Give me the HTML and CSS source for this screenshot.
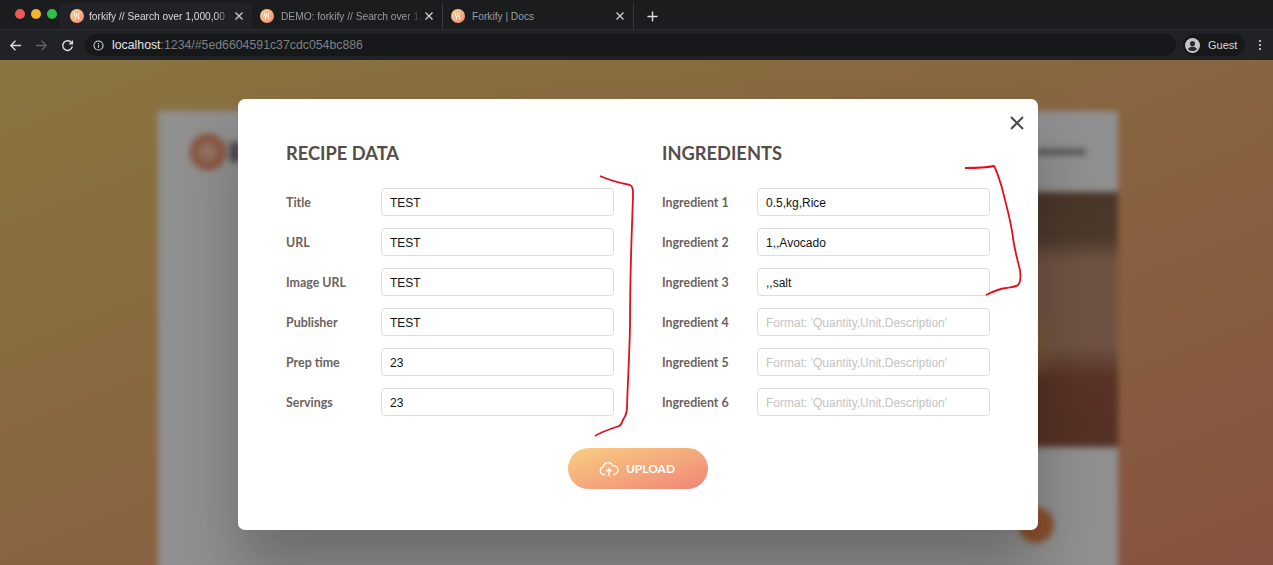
FILE: index.html
```html
<!DOCTYPE html>
<html>
  <head>
    <title>forkify // Search over 1,000,000 recipes</title>
    <link rel="stylesheet" href="styles.css">
  </head>
  <body>
    <svg class="defs" width="0" height="0">
      <defs>
        <linearGradient id="fav" x1="0" y1="0" x2="1" y2="1">
          <stop offset="0" stop-color="#f6d9a0"/>
          <stop offset="1" stop-color="#ef8a6c"/>
        </linearGradient>
        <symbol id="favicon" viewBox="0 0 14 14">
          <circle cx="7" cy="7" r="7" fill="url(#fav)"/>
          <path d="M4.5 4v2.5q0 1 1 1v3M6.5 4v2.5q0 1-1 1M9 4q-1 1-1 3t.8 1v2.500" fill="none" stroke="#fff" stroke-width=".9"/>
        </symbol>
        <symbol id="tabclose" viewBox="0 0 10 10">
          <path d="M1.500 1.500l7 7M8.500 1.500l-7 7" fill="none" stroke="currentColor" stroke-width="1.400"/>
        </symbol>
      </defs>
    </svg>

    <div class="tabstrip">
      <div class="lights">
        <span class="light red"></span>
        <span class="light yellow"></span>
        <span class="light green"></span>
      </div>
      <div class="tab active">
        <svg class="favicon"><use href="#favicon"/></svg>
        <span class="tab-title">forkify // Search over 1,000,00</span>
        <svg class="tab-close"><use href="#tabclose"/></svg>
      </div>
      <div class="tab">
        <svg class="favicon"><use href="#favicon"/></svg>
        <span class="tab-title">DEMO: forkify // Search over 1,</span>
        <svg class="tab-close"><use href="#tabclose"/></svg>
      </div>
      <div class="tab">
        <svg class="favicon"><use href="#favicon"/></svg>
        <span class="tab-title plain">Forkify | Docs</span>
        <svg class="tab-close"><use href="#tabclose"/></svg>
      </div>
      <svg class="new-tab" viewBox="0 0 12 12"><path d="M6 .5v11M.5 6h11" fill="none" stroke="#dcdde0" stroke-width="1.500"/></svg>
    </div>

    <div class="toolbar">
      <svg class="nav" viewBox="0 0 14 14"><path d="M13 7H2M7 2 2 7l5 5" fill="none" stroke="#d8dadd" stroke-width="1.500"/></svg>
      <svg class="nav" viewBox="0 0 14 14"><path d="M1 7h11M7 2l5 5-5 5" fill="none" stroke="#5d6064" stroke-width="1.500"/></svg>
      <svg class="nav" viewBox="0 0 14 14"><path d="M11.600 4.500A5.200 5.200 0 1 0 12.200 8M12.300 1.500v3.700H8.600" fill="none" stroke="#d8dadd" stroke-width="1.500"/></svg>
      <div class="omnibox">
        <svg class="info" viewBox="0 0 12 12"><circle cx="6" cy="6" r="5" fill="none" stroke="#d8dadd" stroke-width="1.100"/><path d="M6 5.200v3.300M6 3.200v1.100" stroke="#d8dadd" stroke-width="1.100"/></svg>
        <span class="host">localhost</span><span class="path">:1234/#5ed6604591c37cdc054bc886</span>
      </div>
      <div class="profile">
        <svg class="avatar" viewBox="0 0 16 16"><circle cx="8" cy="8" r="8" fill="#c4c6c9"/><circle cx="8" cy="6" r="2.700" fill="#2a2b2e"/><path d="M3.200 11.600c1-1.700 3-2.300 4.800-2.300s3.800.6 4.800 2.300c-1.100 1.400-2.800 2.300-4.800 2.300s-3.700-.9-4.800-2.300z" fill="#2a2b2e"/></svg>
        <span>Guest</span>
      </div>
      <svg class="menu" viewBox="0 0 4 12"><circle cx="2" cy="2" r="1.100" fill="#d8dadd"/><circle cx="2" cy="6" r="1.100" fill="#d8dadd"/><circle cx="2" cy="10" r="1.100" fill="#d8dadd"/></svg>
    </div>

    <div class="viewport">
      <div class="app">
        <div class="app-header">
          <span class="app-logo"></span>
          <span class="app-brand"></span>
          <span class="app-nav"></span>
        </div>
        <div class="app-body">
          <div class="app-results"></div>
          <div class="app-recipe">
            <div class="app-photo"></div>
            <div class="app-info">
              <span class="app-round"></span>
            </div>
          </div>
        </div>
      </div>
      <div class="overlay"></div>

      <form class="modal">
        <svg class="modal-close" viewBox="0 0 14 14"><path d="M1 1l12 12M13 1 1 13" fill="none" stroke="#4a4a4a" stroke-width="2"/></svg>
        <div class="columns">
          <div class="column">
            <h3 class="heading">RECIPE DATA</h3>
            <label class="label">Title</label>
            <input class="field" value="TEST">
            <label class="label">URL</label>
            <input class="field" value="TEST">
            <label class="label">Image URL</label>
            <input class="field" value="TEST">
            <label class="label">Publisher</label>
            <input class="field" value="TEST">
            <label class="label">Prep time</label>
            <input class="field" value="23">
            <label class="label">Servings</label>
            <input class="field" value="23">
          </div>
          <div class="column">
            <h3 class="heading">INGREDIENTS</h3>
            <label class="label">Ingredient 1</label>
            <input class="field" value="0.5,kg,Rice">
            <label class="label">Ingredient 2</label>
            <input class="field" value="1,,Avocado">
            <label class="label">Ingredient 3</label>
            <input class="field" value=",,salt">
            <label class="label">Ingredient 4</label>
            <input class="field" placeholder="Format: 'Quantity,Unit,Description'">
            <label class="label">Ingredient 5</label>
            <input class="field" placeholder="Format: 'Quantity,Unit,Description'">
            <label class="label">Ingredient 6</label>
            <input class="field" placeholder="Format: 'Quantity,Unit,Description'">
          </div>
        </div>
        <button class="upload" type="button">
          <svg class="upload-icon" viewBox="0 0 20 16"><path d="M6 13.500H4.800A3.800 3.800 0 0 1 4.300 6 5 5 0 0 1 14 5a4.300 4.300 0 0 1 1.500 8.500H14M10 15V8M7.300 10.500 10 7.800l2.700 2.700" fill="none" stroke="#fff" stroke-width="1.300"/></svg>
          <span>UPLOAD</span>
        </button>
      </form>

      <!-- pen marks drawn over the screen -->
      <svg class="marks" viewBox="0 0 1273 505">
        <path d="M600 116c9 4 20 7 30 9 3 1 3 5 3 12-1 30-3 70-3 130-1 40-3 70-3 82-1 6-2 8-3 9-3 5-2 7-5 8-9 3-18 6-24 10" fill="none" stroke="#e0101c" stroke-width="1.800"/>
        <path d="M965 108c10 0 20 0 29-2 3 5 5 12 8 22 4 16 9 33 11 50 2 14 5 24 7 32 1 8 0 13-2 15-2 2-7 2-12 3-8 1-14 4-20 7" fill="none" stroke="#e0101c" stroke-width="1.800"/>
      </svg>
    </div>
  </body>
</html>
```

FILE: styles.css
```css
* {
  box-sizing: border-box;
}

html,
body {
  margin: 0;
  height: 100%;
  overflow: hidden;
}

body {
  display: flex;
  flex-direction: column;
  background: #202124;
  font-family: "Liberation Sans", Arial, sans-serif;
}

.defs {
  position: absolute;
}

/* browser chrome */
.tabstrip {
  display: flex;
  align-items: flex-end;
  height: 30px;
  background: #1b1c1e;
  border-bottom: 1px solid #2c2d30;
}

.lights {
  display: flex;
  gap: 6px;
  width: 60px;
  padding: 0 0 10px 15px;
}

.light {
  width: 10px;
  height: 10px;
  border-radius: 50%;
}

.red {
  background: #ed5a56;
}

.yellow {
  background: #f0b52c;
}

.green {
  background: #2fc049;
}

.tab {
  display: flex;
  align-items: center;
  width: 191px;
  height: 26px;
  padding: 0 8px;
  border-right: 1px solid #3a3b3e;
  color: #9a9c9f;
  font-size: 10.200px;
}

.tab.active {
  width: 192px;
  padding-left: 10px;
  border-right: 0;
  border-radius: 7px 7px 0 0;
  background: #202225;
  color: #d8dadd;
}

.favicon {
  flex: none;
  width: 14px;
  height: 14px;
  margin-right: 7px;
}

.active .favicon {
  margin-right: 5px;
}

.tab-title {
  flex: 1;
  overflow: hidden;
  white-space: nowrap;
  -webkit-mask-image: linear-gradient(to right, #000 88%, transparent);
  mask-image: linear-gradient(to right, #000 88%, transparent);
}

.tab-title.plain {
  -webkit-mask-image: none;
  mask-image: none;
}

.tab-close {
  flex: none;
  width: 10px;
  height: 10px;
  margin-left: 2px;
  color: #c9cbce;
}

.new-tab {
  width: 11px;
  height: 11px;
  margin: 0 0 7px 13px;
}

.toolbar {
  display: flex;
  align-items: center;
  height: 30px;
  padding: 0 11px 0 9px;
  background: #202225;
}

.nav {
  flex: none;
  width: 13px;
  height: 13px;
  margin-right: 13px;
}

.omnibox {
  flex: 1;
  display: flex;
  align-items: center;
  height: 22px;
  margin-left: -2px;
  padding-left: 8px;
  border-radius: 11px;
  background: #17181a;
  font-size: 12.300px;
}

.info {
  width: 11px;
  height: 11px;
  margin-right: 8px;
}

.host {
  color: #e3e4e6;
}

.path {
  color: #7d8084;
}

.profile {
  display: flex;
  align-items: center;
  gap: 8px;
  width: 62px;
  height: 22px;
  margin-left: 7px;
  padding-left: 2px;
  border-radius: 11px;
  background: #17181a;
  color: #d8dadd;
  font-size: 11px;
}

.avatar {
  width: 15px;
  height: 15px;
}

.menu {
  width: 4px;
  height: 12px;
  margin-left: 13px;
}

/* blurred page behind the modal */
.viewport {
  position: relative;
  flex: 1;
  overflow: hidden;
  background: linear-gradient(to right bottom, #e6c46c, #e18a6b);
}

.app {
  display: flex;
  flex-direction: column;
  width: 960px;
  height: 600px;
  margin: 51px 0 0 158px;
  background: #f0f0f0;
  filter: blur(3px);
}

.app-header {
  display: flex;
  align-items: center;
  height: 81px;
  padding: 0 32px;
}

.app-logo {
  width: 36px;
  height: 36px;
  border-radius: 50%;
  background: radial-gradient(#f4c2a6 20%, #e27f58 65%);
}

.app-brand {
  width: 10px;
  height: 20px;
  margin-left: 4px;
  background: #777;
}

.app-nav {
  width: 50px;
  height: 6px;
  margin-left: auto;
  background: #8a8a8a;
}

.app-body {
  flex: 1;
  display: flex;
}

.app-results {
  width: 240px;
}

.app-recipe {
  flex: 1;
}

.app-photo {
  height: 255px;
  background:
    radial-gradient(circle at 86% 59%, #d8984f, transparent 7%),
    linear-gradient(#7c5c46, #80604a 18%, #b88a70 27%, #b88a72 60%, #93543e 73%, #8e5240);
}

.app-info {
  display: flex;
  justify-content: flex-end;
  padding: 60px 64px 0 0;
}

.app-round {
  width: 36px;
  height: 36px;
  border-radius: 50%;
  background: #e8854f;
}

.overlay {
  position: absolute;
  inset: 0;
  background: rgba(0, 0, 0, 0.4);
}

/* modal */
.modal {
  position: absolute;
  top: 39px;
  left: 238px;
  display: flex;
  flex-direction: column;
  align-items: center;
  width: 800px;
  height: 431px;
  padding: 44px 48px 0;
  border-radius: 7px;
  background: #fff;
  box-shadow: 0 40px 60px rgba(0, 0, 0, 0.25);
}

.modal-close {
  position: absolute;
  top: 17px;
  right: 14px;
  width: 14px;
  height: 14px;
}

.columns {
  display: grid;
  grid-template-columns: 1fr 1fr;
  gap: 48px;
  width: 100%;
}

.column {
  display: grid;
  grid-template-columns: 95px 233px;
  grid-template-rows: 33px repeat(6, 28px);
  row-gap: 12px;
  align-items: center;
}

.heading {
  grid-column: 1 / -1;
  align-self: start;
  margin: 0;
  color: #554d49;
  font-family: Lato, sans-serif;
  font-size: 18.300px;
  font-weight: 700;
  line-height: 20px;
}

.label {
  color: #6b625e;
  font-family: Lato, sans-serif;
  font-size: 12.400px;
  font-weight: 700;
}

.field {
  width: 100%;
  height: 28px;
  padding: 1px 9px 0 8px;
  border: 1px solid #ddd;
  border-radius: 4px;
  color: #111;
  font-family: "Liberation Sans", Arial, sans-serif;
  font-size: 12px;
}

.field::placeholder {
  color: #c4c4c4;
}

.upload {
  display: flex;
  align-items: center;
  justify-content: center;
  gap: 7px;
  width: 140px;
  height: 41px;
  margin-top: 32px;
  padding: 0 2px 0 0;
  border: 0;
  border-radius: 21px;
  background: linear-gradient(to right bottom, #f8cf80, #f18578);
  color: #fff;
  font-family: Lato, sans-serif;
  font-size: 12px;
  font-weight: 700;
}

.upload-icon {
  width: 20px;
  height: 16px;
}

.marks {
  position: absolute;
  top: 0;
  left: 0;
  width: 1273px;
  height: 505px;
  pointer-events: none;
}
```
